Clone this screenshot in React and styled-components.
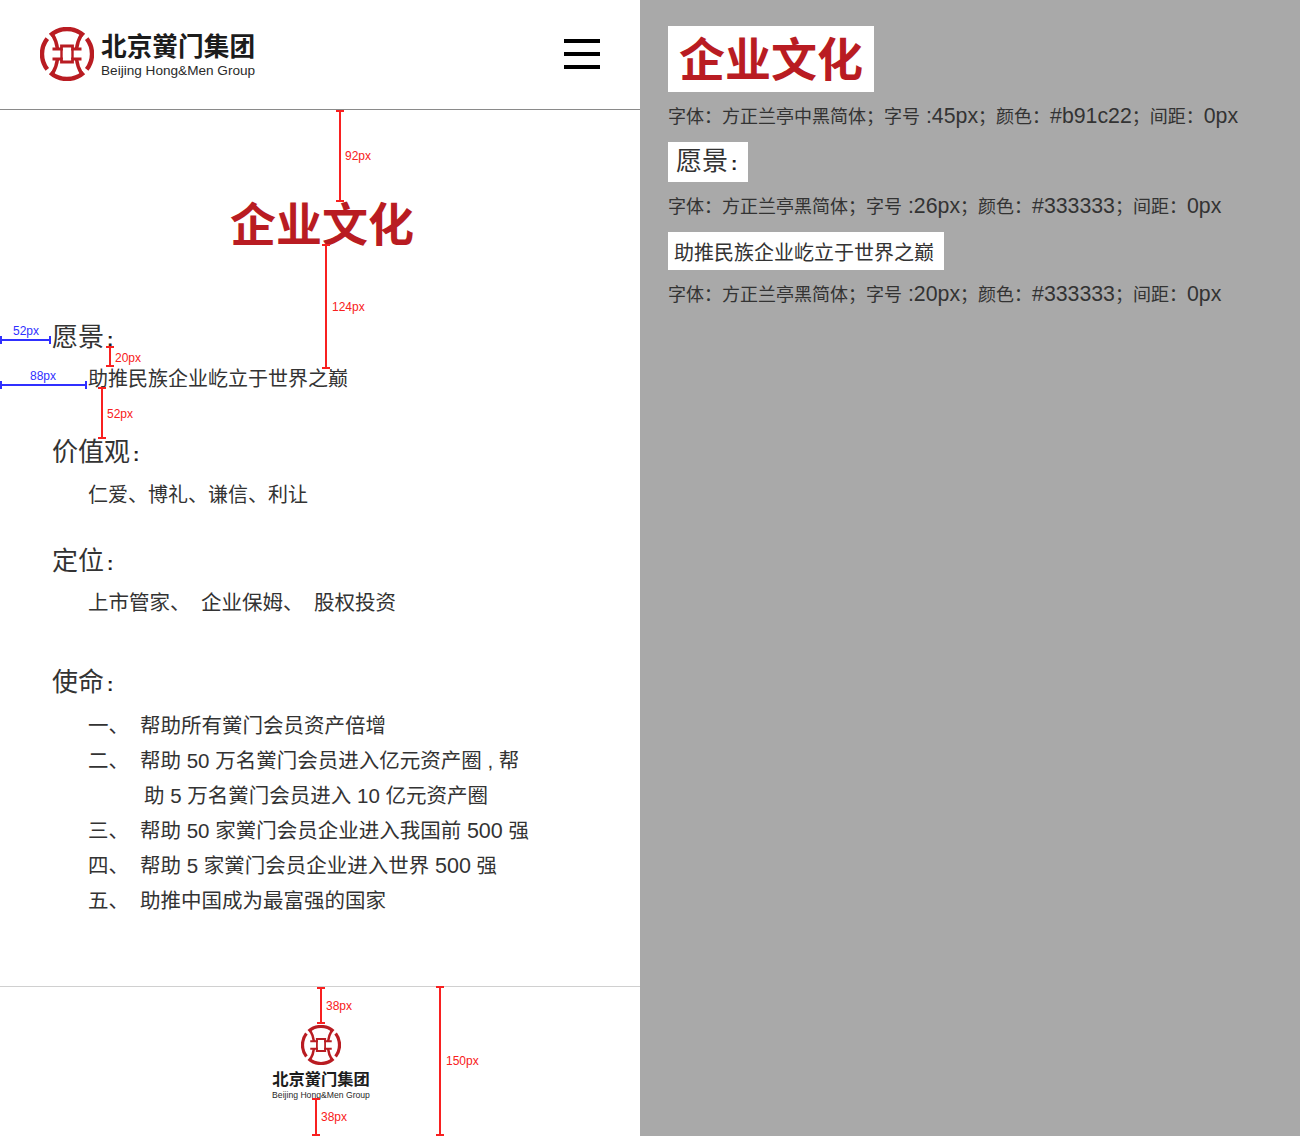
import React from "react";
import styled, { createGlobalStyle } from "styled-components";

const Global = createGlobalStyle`
  html, body { margin: 0; padding: 0; background: #fff; }
  body { font-family: "Liberation Sans", "Noto Sans CJK SC", sans-serif; color: #333; }
  * { box-sizing: border-box; }
`;

const Page = styled.div`
  display: grid;
  grid-template-columns: 640px 660px;
  width: 1300px;
  height: 1136px;
  overflow: hidden;
`;

const Phone = styled.div`
  position: relative;
  display: flex;
  flex-direction: column;
  height: 1136px;
  background: #fff;
`;

const Header = styled.header`
  height: 110px;
  flex: none;
  display: flex;
  align-items: center;
  justify-content: space-between;
  padding: 0 40px 2px 40px;
  border-bottom: 1px solid #8a8a8a;
`;

const Brand = styled.div`
  display: flex;
  align-items: center;
  gap: 7px;
`;

const BrandText = styled.div`
  display: flex;
  flex-direction: column;
`;

const BrandName = styled.div`
  font-family: "Noto Sans CJK SC", sans-serif;
  font-weight: 700;
  font-size: ${(p) => p.$size}px;
  line-height: ${(p) => p.$line}px;
  margin-bottom: ${(p) => p.$gap || 0}px;
  color: #1c1c1c;
  white-space: nowrap;
`;

const BrandEn = styled.div`
  font-size: ${(p) => p.$size}px;
  line-height: ${(p) => p.$line}px;
  color: #2a2a2a;
  white-space: nowrap;
`;

const Burger = styled.div`
  display: flex;
  flex-direction: column;
  gap: 9px;
  width: 36px;
`;

const BurgerBar = styled.span`
  display: block;
  height: 4px;
  background: #000;
`;

const Main = styled.main`
  flex: 1;
  padding-top: 79px;
`;

const Title = styled.h1`
  margin: 0;
  font-family: "Noto Sans CJK SC", sans-serif;
  font-size: 46px;
  line-height: 64px;
  font-weight: 700;
  color: #b91c22;
  text-align: center;
  padding-left: 4px;
`;

const Section = styled.section`
  margin-top: ${(p) => p.$top}px;
  padding-left: 52px;
`;

const Heading = styled.h2`
  margin: 0 0 ${(p) => p.$gap ?? 6}px;
  font-size: 26px;
  line-height: 40px;
  font-weight: 400;
  color: #333;
`;

const Colon = styled.span`
  font-size: 19px;
  line-height: 0;
  font-weight: 700;
  margin-left: 3px;
  color: #222;
`;

const Body = styled.div`
  padding-left: 36px;
  font-size: 20px;
  line-height: 35px;
  color: #333;
  white-space: nowrap;
`;

const Tags = styled(Body)`
  display: flex;
  gap: 10.5px;
  font-size: 20.5px;
  margin-top: -2px;
`;

const ListRow = styled.div`
  display: grid;
  grid-template-columns: 52px 1fr;
  margin-left: 36px;
  font-size: 20.5px;
  line-height: 35px;
  color: #333;
  white-space: nowrap;
`;

const Continued = styled.span`
  padding-left: 4px;
`;

const Num = styled.span`
  font-size: 21.5px;
  line-height: 0;
`;

const Footer = styled.footer`
  height: 150px;
  flex: none;
  border-top: 1px solid #d0d0d0;
  display: flex;
  flex-direction: column;
  align-items: center;
  padding-top: 38px;
  padding-left: 2px;
`;

const FooterName = styled(BrandName)`
  margin-top: 2px;
`;

const Dim = styled.div`
  position: absolute;
  background: ${(p) => p.$color};
  left: ${(p) => p.$x}px;
  top: ${(p) => p.$y}px;
  width: ${(p) => (p.$v ? 2 : p.$len)}px;
  height: ${(p) => (p.$v ? p.$len : 2)}px;
  &::before, &::after {
    content: "";
    position: absolute;
    background: ${(p) => p.$color};
    ${(p) => (p.$v ? "left: -3px; width: 8px; height: 2px;" : "top: -3px; width: 2px; height: 8px;")}
  }
  &::before { ${(p) => (p.$v ? "top: 0;" : "left: 0;")} }
  &::after { ${(p) => (p.$v ? "bottom: 0;" : "right: 0;")} }
`;

const DimLabel = styled.span`
  position: absolute;
  left: ${(p) => p.$x}px;
  top: ${(p) => p.$y - 7}px;
  font-family: "Liberation Sans", sans-serif;
  font-size: 12px;
  line-height: 14px;
  color: ${(p) => p.$color};
  white-space: nowrap;
`;

const Spec = styled.aside`
  background: #a9a9a9;
  height: 1136px;
  padding: 26px 0 0 28px;
  display: flex;
  flex-direction: column;
  align-items: flex-start;
`;

const Chip = styled.div`
  background: #fff;
  height: ${(p) => p.$h}px;
  padding: ${(p) => p.$top}px ${(p) => p.$padR}px ${(p) => p.$bottom}px ${(p) => p.$pad}px;
  display: flex;
  align-items: center;
  font-size: ${(p) => p.$size}px;
  font-weight: ${(p) => (p.$bold ? 700 : 400)};
  color: ${(p) => p.$color};
  white-space: nowrap;
`;

const ChipText = styled.span`
  display: block;
  line-height: 1.2;
`;

const Caption = styled.p`
  margin: 11px 0 11px 0;
  font-size: 18px;
  line-height: 28px;
  height: 28px;
  color: #333;
  white-space: nowrap;
`;

const Latin = styled.span`
  font-size: 21.3px;
  line-height: 0;
`;

const RED = "#f82020";
const BLUE = "#3030ff";

function Mark({ size }) {
  return (
    <svg width={size} height={size} viewBox="0 0 54 54" fill="none" style={{ flex: "none" }}>
      <g stroke="#b91c22" fill="none">
        <path strokeWidth="4.4" d="M7.3 11.6 A25 25 0 0 0 7.3 42.4" />
        <path strokeWidth="4.4" d="M46.7 11.6 A25 25 0 0 1 46.7 42.4" />
        <path strokeWidth="4.4" d="M10.3 8.4 A25 25 0 0 1 43.7 8.4" />
        <path strokeWidth="4.4" d="M10.3 45.6 A25 25 0 0 0 43.7 45.6" />
        <path strokeWidth="3.4" d="M12.5 7.5 Q16.5 14 17.5 22 M17.5 32 Q16.5 40 12.5 46.5" />
        <path strokeWidth="3.4" d="M41.5 7.5 Q37.5 14 36.5 22 M36.5 32 Q37.5 40 41.5 46.5" />
        <path strokeWidth="2.8" d="M12.5 22 H21.5 V19 H32.5 V22 H41.5" />
        <path strokeWidth="2.8" d="M12.5 32 H21.5 V35 H32.5 V32 H41.5" />
        <path strokeWidth="2.4" d="M21.5 22 V32 M32.5 22 V32" />
      </g>
    </svg>
  );
}

const dims = [
  { v: true, x: 339, y: 110, len: 92, color: RED },
  { v: true, x: 325, y: 244, len: 125, color: RED },
  { v: true, x: 109, y: 346, len: 21, color: RED },
  { v: true, x: 101, y: 387, len: 52, color: RED },
  { v: false, x: 0, y: 339, len: 51, color: BLUE },
  { v: false, x: 0, y: 384, len: 87, color: BLUE },
  { v: true, x: 320, y: 987, len: 37, color: RED },
  { v: true, x: 315, y: 1098, len: 38, color: RED },
  { v: true, x: 439, y: 986, len: 150, color: RED },
];

const labels = [
  { x: 345, y: 156, t: "92px", color: RED },
  { x: 332, y: 307, t: "124px", color: RED },
  { x: 115, y: 358, t: "20px", color: RED },
  { x: 107, y: 414, t: "52px", color: RED },
  { x: 13, y: 331, t: "52px", color: BLUE },
  { x: 30, y: 376, t: "88px", color: BLUE },
  { x: 326, y: 1006, t: "38px", color: RED },
  { x: 321, y: 1117, t: "38px", color: RED },
  { x: 446, y: 1061, t: "150px", color: RED },
];

const mission = [
  ["一、", "帮助所有黉门会员资产倍增"],
  ["二、", "帮助 50 万名黉门会员进入亿元资产圈 , 帮"],
  ["", <Continued key="c">助 5 万名黉门会员进入 10 亿元资产圈</Continued>],
  ["三、", <React.Fragment key="d">帮助 50 家黉门会员企业进入我国前 <Num>500</Num> 强</React.Fragment>],
  ["四、", <React.Fragment key="e">帮助 5 家黉门会员企业进入世界 <Num>500</Num> 强</React.Fragment>],
  ["五、", "助推中国成为最富强的国家"],
];

const specs = [
  { h: 66, pad: 11, padR: 11, top: 4, bottom: 0, size: 46, bold: true, color: "#b91c22", text: "企业文化", face: "中黑", px: "45", hex: "#b91c22" },
  { h: 40, pad: 8, padR: 11, top: 0, bottom: 1, size: 26, color: "#333", text: <>愿景<Colon>:</Colon></>, face: "黑", px: "26", hex: "#333333" },
  { h: 38, pad: 6, padR: 10, top: 4, bottom: 0, size: 20, color: "#333", text: "助推民族企业屹立于世界之巅", face: "黑", px: "20", hex: "#333333" },
];

export default function App() {
  return (
    <Page>
      <Global />
      <Phone>
        <Header>
          <Brand>
            <Mark size={54} />
            <BrandText>
              <BrandName $size={25.7} $line={31} $gap={2}>北京黉门集团</BrandName>
              <BrandEn $size={13.6} $line={17}>Beijing Hong&amp;Men Group</BrandEn>
            </BrandText>
          </Brand>
          <Burger>
            <BurgerBar />
            <BurgerBar />
            <BurgerBar />
          </Burger>
        </Header>
        <Main>
          <Title>企业文化</Title>
          <Section $top={64}>
            <Heading $gap={5}>愿景<Colon>:</Colon></Heading>
            <Body>助推民族企业屹立于世界之巅</Body>
          </Section>
          <Section $top={35}>
            <Heading>价值观<Colon>:</Colon></Heading>
            <Body>仁爱、博礼、谦信、利让</Body>
          </Section>
          <Section $top={28}>
            <Heading>定位<Colon>:</Colon></Heading>
            <Tags>
              <span>上市管家、</span>
              <span>企业保姆、</span>
              <span>股权投资</span>
            </Tags>
          </Section>
          <Section $top={42}>
            <Heading>使命<Colon>:</Colon></Heading>
            {mission.map(([m, c], i) => (
              <ListRow key={i}>
                <span>{m}</span>
                <span>{c}</span>
              </ListRow>
            ))}
          </Section>
        </Main>
        <Footer>
          <Mark size={40} />
          <FooterName $size={16.3} $line={23}>北京黉门集团</FooterName>
          <BrandEn $size={8.65} $line={10}>Beijing Hong&amp;Men Group</BrandEn>
        </Footer>
        {dims.map((d, i) => (
          <Dim key={i} $v={d.v} $x={d.x} $y={d.y} $len={d.len} $color={d.color} />
        ))}
        {labels.map((l, i) => (
          <DimLabel key={i} $x={l.x} $y={l.y} $color={l.color}>{l.t}</DimLabel>
        ))}
      </Phone>
      <Spec>
        {specs.map((s) => (
          <React.Fragment key={s.px}>
            <Chip $h={s.h} $pad={s.pad} $padR={s.padR} $top={s.top} $bottom={s.bottom} $size={s.size} $bold={s.bold} $color={s.color}><ChipText>{s.text}</ChipText></Chip>
            <Caption>
              字体：方正兰亭{s.face}简体；字号<Latin> :{s.px}px</Latin>；颜色：<Latin>{s.hex}</Latin>；间距：<Latin>0px</Latin>
            </Caption>
          </React.Fragment>
        ))}
      </Spec>
    </Page>
  );
}
